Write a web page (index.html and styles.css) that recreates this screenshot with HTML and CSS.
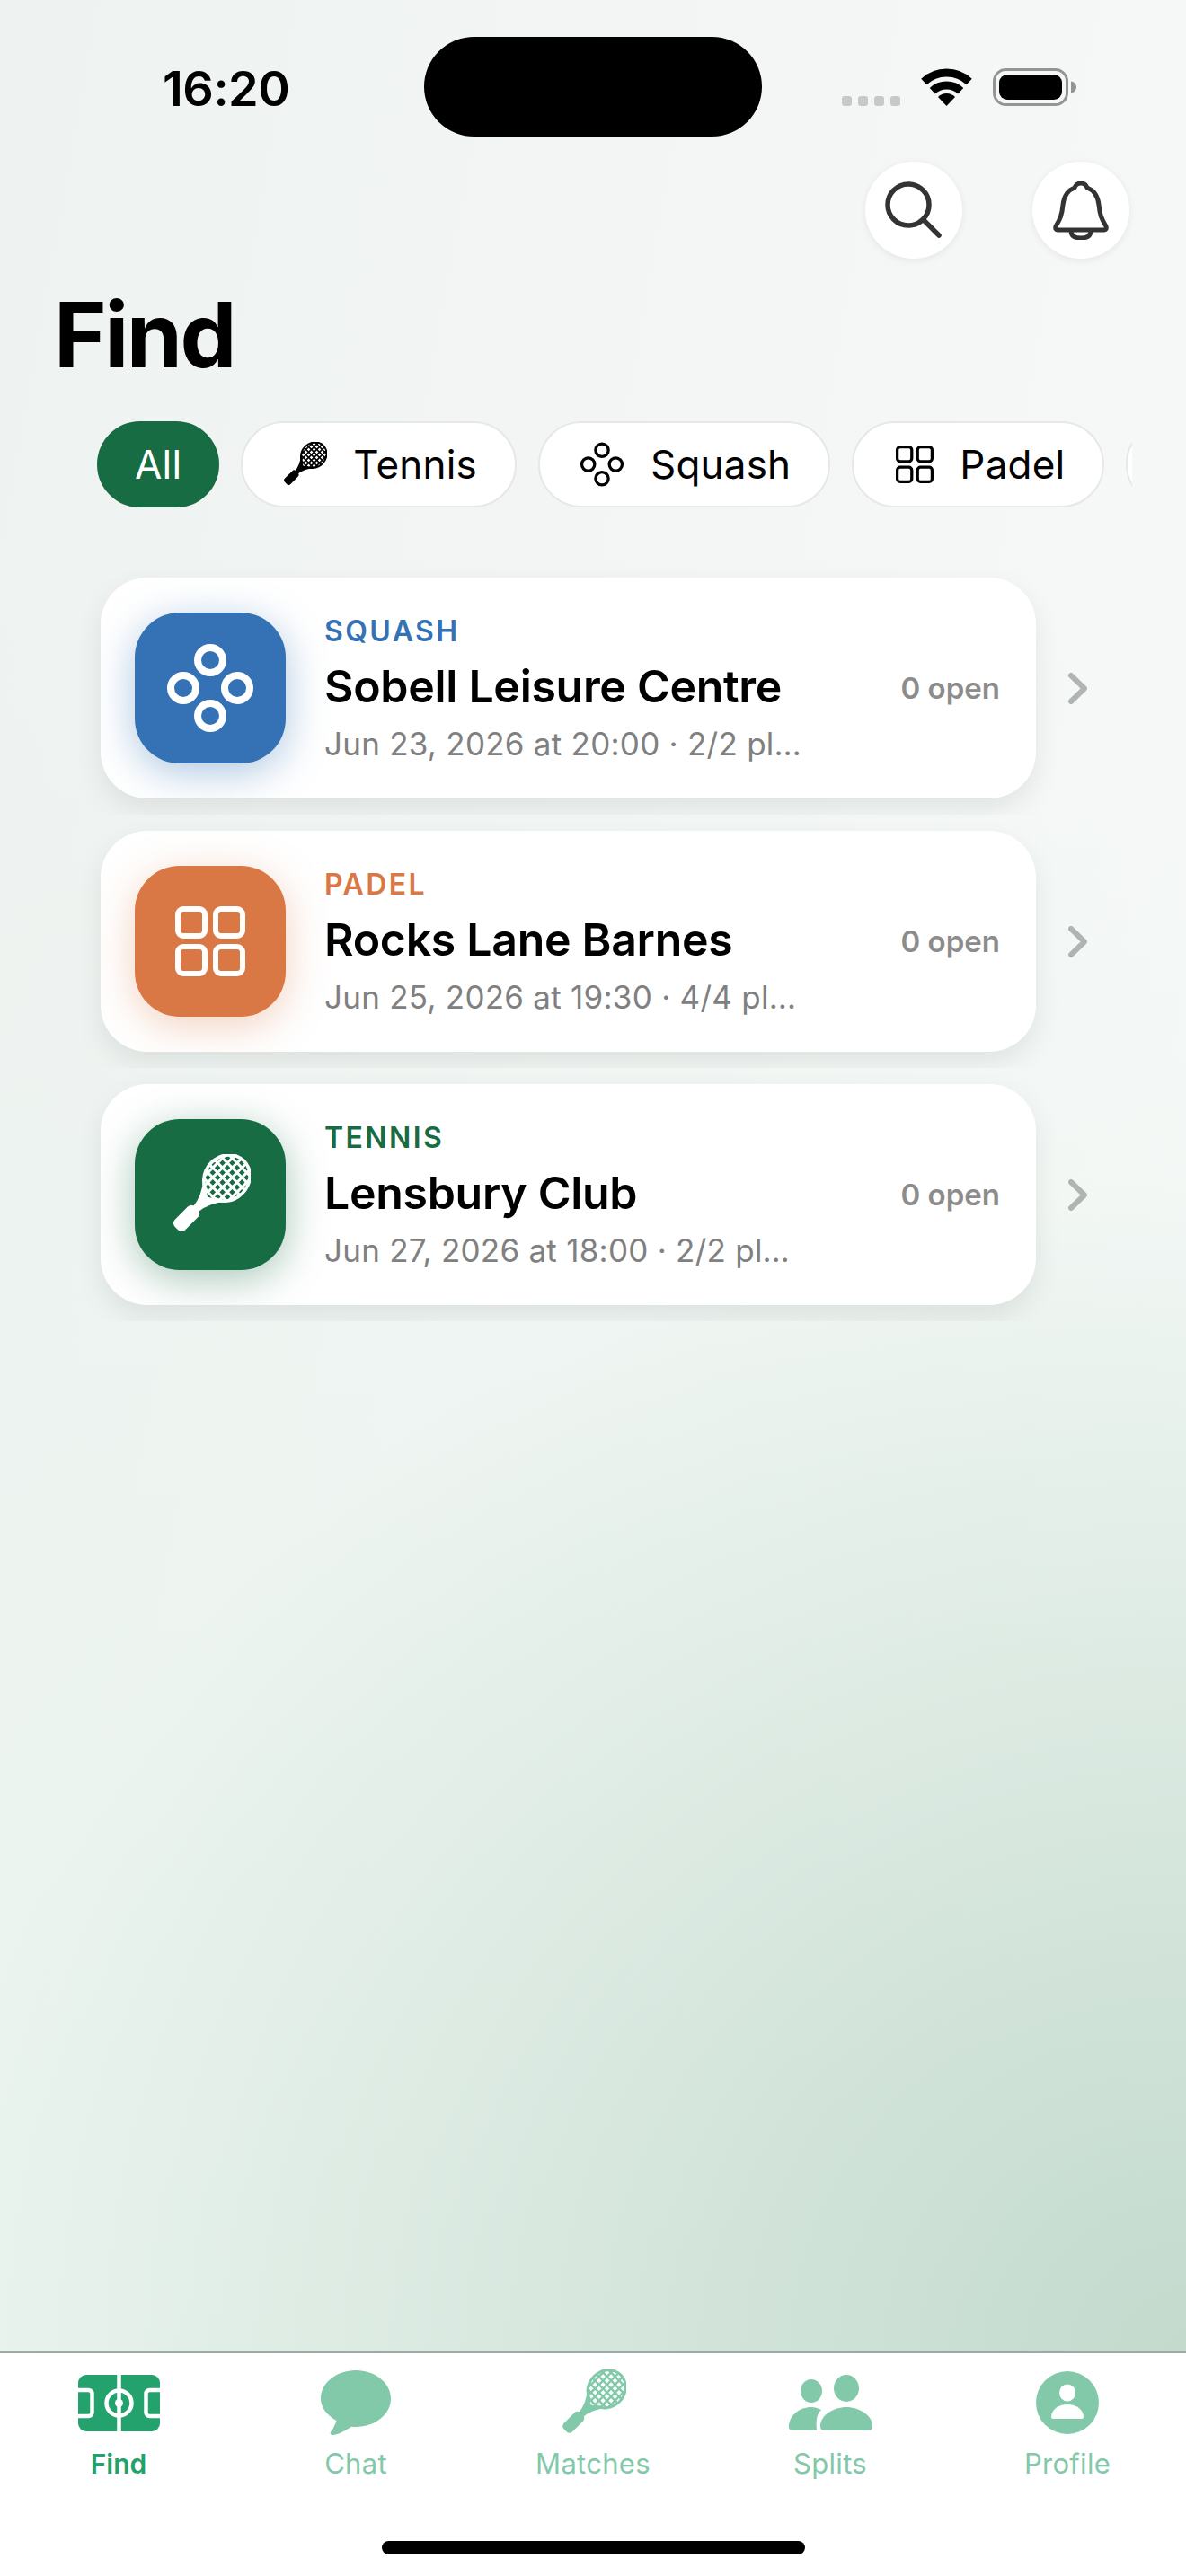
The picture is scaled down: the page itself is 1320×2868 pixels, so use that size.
FILE: index.html
```html
<!DOCTYPE html>
<html lang="en">
<head>
	<meta charset="UTF-8">
	<title>Find</title>
	<link rel="stylesheet" href="styles.css">
</head>
<body>
	<svg class="defs" aria-hidden="true">
		<symbol id="i-racket" viewBox="0 0 100 100">
			<clipPath id="mesh-clip"><ellipse cx="50" cy="21" rx="25" ry="28"/></clipPath>
			<g transform="rotate(45 50 50)">
				<ellipse cx="50" cy="21" rx="29" ry="32" fill="currentColor"/>
				<path d="M30 42Q44 58 45.500 76h9Q56 58 70 42z" fill="currentColor"/>
				<rect x="41" y="74" width="18" height="35" rx="6" fill="currentColor"/>
				<g clip-path="url(#mesh-clip)" class="mesh">
					<path d="M24.500 -8V50M33 -8V50M41.500 -8V50M50 -8V50M58.500 -8V50M67 -8V50M75.500 -8V50"/>
				</g>
				<path class="throat-hole" d="M50 54.500l-4.500 -3h9z"/>
			</g>
		</symbol>
		<symbol id="i-rings" viewBox="0 0 96 98">
			<g fill="none" stroke="currentColor">
				<circle cx="48" cy="18" r="14"/>
				<circle cx="18" cy="49" r="14"/>
				<circle cx="78" cy="49" r="14"/>
				<circle cx="48" cy="80" r="14"/>
			</g>
		</symbol>
		<symbol id="i-grid" viewBox="0 0 78 78">
			<g fill="none" stroke="currentColor" stroke-width="6">
				<rect x="3" y="3" width="30" height="30" rx="6"/>
				<rect x="45" y="3" width="30" height="30" rx="6"/>
				<rect x="3" y="45" width="30" height="30" rx="6"/>
				<rect x="45" y="45" width="30" height="30" rx="6"/>
			</g>
		</symbol>
		<symbol id="i-chevron" viewBox="0 0 21 35">
			<path d="M3 3l15 14.500L3 32" fill="none" stroke="currentColor" stroke-width="6" stroke-linecap="round" stroke-linejoin="round"/>
		</symbol>
	</svg>

	<div class="phone">
		<main class="screen">
			<div class="status">
				<div class="status-left">16:20</div>
				<div class="island"></div>
				<div class="status-right">
					<div class="signal"><span></span><span></span><span></span><span></span></div>
					<svg class="wifi" viewBox="0 0 57 42">
						<path d="M28.500 42L19 32A13.500 13.500 0 0 1 38 32z"/>
						<path class="wifi-arc" d="M12.800 25.200A23 23 0 0 1 44.200 25.200"/>
						<path class="wifi-arc" d="M3.300 15A37 37 0 0 1 53.700 15"/>
					</svg>
					<svg class="battery" viewBox="0 0 93 42">
						<rect class="battery-case" x="1.500" y="1.500" width="81" height="39" rx="13"/>
						<rect x="7" y="7" width="70" height="28" rx="9"/>
						<path class="battery-cap" d="M87 14.500q6 1 6 6.500t-6 6.500z"/>
					</svg>
				</div>
			</div>

			<div class="actions">
				<button class="round-btn">
					<svg class="search-icon" viewBox="0 0 64 64">
						<circle cx="26" cy="26" r="23"/>
						<path d="M43 43l17 17"/>
					</svg>
				</button>
				<button class="round-btn">
					<svg class="bell-icon" viewBox="0 0 62 66">
						<path d="M31 3C35 3 37 5 38 8C46 11 50 18 51 27C52 38 54 43 59 51Q60 55 57 55H5Q2 55 3 51C8 43 10 38 11 27C12 18 16 11 24 8C25 5 27 3 31 3z"/>
						<path d="M20 56C20 62 25 64 31 64C37 64 42 62 42 56"/>
					</svg>
				</button>
			</div>

			<h1 class="title">Find</h1>

			<div class="chips">
				<div class="chip chip-active">All</div>
				<div class="chip">
					<svg class="chip-icon"><use href="#i-racket"/></svg>
					Tennis
				</div>
				<div class="chip">
					<svg class="chip-icon rings-thin"><use href="#i-rings"/></svg>
					Squash
				</div>
				<div class="chip">
					<svg class="chip-icon grid-small"><use href="#i-grid"/></svg>
					Padel
				</div>
				<div class="chip chip-cut"></div>
			</div>

			<div class="list">
				<div class="row">
					<div class="card">
						<div class="badge badge-squash">
							<svg class="badge-rings"><use href="#i-rings"/></svg>
						</div>
						<div class="info">
							<div class="sport sport-squash">SQUASH</div>
							<div class="venue">Sobell Leisure Centre</div>
							<div class="when">Jun 23, 2026 at 20:00 · 2/2 pl…</div>
						</div>
						<div class="open">0 open</div>
					</div>
					<svg class="chevron"><use href="#i-chevron"/></svg>
				</div>
				<div class="row">
					<div class="card">
						<div class="badge badge-padel">
							<svg class="badge-grid"><use href="#i-grid"/></svg>
						</div>
						<div class="info">
							<div class="sport sport-padel">PADEL</div>
							<div class="venue">Rocks Lane Barnes</div>
							<div class="when">Jun 25, 2026 at 19:30 · 4/4 pl…</div>
						</div>
						<div class="open">0 open</div>
					</div>
					<svg class="chevron"><use href="#i-chevron"/></svg>
				</div>
				<div class="row">
					<div class="card">
						<div class="badge badge-tennis">
							<svg class="badge-racket"><use href="#i-racket"/></svg>
						</div>
						<div class="info">
							<div class="sport sport-tennis">TENNIS</div>
							<div class="venue">Lensbury Club</div>
							<div class="when">Jun 27, 2026 at 18:00 · 2/2 pl…</div>
						</div>
						<div class="open">0 open</div>
					</div>
					<svg class="chevron"><use href="#i-chevron"/></svg>
				</div>
			</div>
		</main>

		<nav class="tabbar">
			<div class="tabs">
				<div class="tab tab-active">
					<div class="tab-icon">
						<svg class="ic-field" viewBox="0 0 91 63">
							<rect width="91" height="63" rx="9" fill="currentColor"/>
							<g class="field-lines">
								<path d="M45.500 0V63"/>
								<circle cx="45.500" cy="31.500" r="14"/>
								<path d="M0 17H11.500a4 4 0 0 1 4 4V42a4 4 0 0 1 -4 4H0"/>
								<path d="M91 17H79.500a4 4 0 0 0 -4 4V42a4 4 0 0 0 4 4H91"/>
							</g>
							<circle cx="45.500" cy="31.500" r="4.500" fill="#fff"/>
						</svg>
					</div>
					<div class="tab-label">Find</div>
				</div>
				<div class="tab">
					<div class="tab-icon">
						<svg class="ic-chat" viewBox="0 0 78 72">
							<path fill="currentColor" d="M39 0C60.500 0 78 14 78 31.500S60.500 63 39 63C37 63 35.500 63 34 62.800C28 67 21 71 14 72C10.500 72 10 70 11.500 68C14 64.500 16 60.500 17.500 56C7 50 0 41.500 0 31.500C0 14 17.500 0 39 0z"/>
						</svg>
					</div>
					<div class="tab-label">Chat</div>
				</div>
				<div class="tab">
					<div class="tab-icon">
						<svg class="ic-racket"><use href="#i-racket"/></svg>
					</div>
					<div class="tab-label">Matches</div>
				</div>
				<div class="tab">
					<div class="tab-icon">
						<svg class="ic-splits" viewBox="0 0 93 62">
							<g fill="currentColor">
								<ellipse cx="25" cy="18" rx="12" ry="13"/>
								<ellipse cx="64" cy="15" rx="14" ry="15"/>
								<path d="M35 57C35 45 50 36 64 36C78 36 93 45 93 57Q93 62 89 62H39Q35 62 35 57z"/>
								<path d="M0 58C0 45 12 36 25 36C29 36 32 37 36 39C31 44 30 50 31 62H4Q0 62 0 58z"/>
							</g>
						</svg>
					</div>
					<div class="tab-label">Splits</div>
				</div>
				<div class="tab">
					<div class="tab-icon">
						<svg class="ic-profile" viewBox="0 0 70 70">
							<circle cx="35" cy="35" r="35" fill="currentColor"/>
							<ellipse cx="35" cy="24" rx="9" ry="9.500" fill="#fff"/>
							<path d="M17 51C17 43 25 37 35 37C45 37 53 43 53 51Q53 53 51 53H19Q17 53 17 51z" fill="#fff"/>
						</svg>
					</div>
					<div class="tab-label">Profile</div>
				</div>
			</div>
			<div class="home-bar"></div>
		</nav>
	</div>
</body>
</html>
```

FILE: styles.css
```css
*{box-sizing: border-box;margin: 0;padding: 0;}
body{font-family: Inter, "Liberation Sans", sans-serif;color: #000;}
.defs{display: block;width: 0;height: 0;}
.phone{width: 1320px;height: 2868px;display: flex;flex-direction: column;overflow: hidden;}

.screen{flex: 1;min-height: 0;background: radial-gradient(ellipse 1400px 1300px at 100% 100%, #c3dacd 0%, rgba(195,218,205,0) 100%), linear-gradient(180deg, rgba(233,244,238,0) 25%, rgba(233,244,238,0.85) 100%), linear-gradient(100deg, #eef2f0, #f8faf9);}

/* status bar */
.status{display: flex;align-items: center;padding-top: 41px;}
.status-left{width: 472px;padding: 3px 0 0 181px;font-size: 54px;font-weight: 600;letter-spacing: -0.500px;}
.island{width: 376px;height: 111px;background: #000;border-radius: 56px;}
.status-right{flex: 1;display: flex;justify-content: flex-end;align-items: flex-end;padding-right: 122px;}
.signal{display: flex;gap: 7px;margin-right: 23px;}
.signal span{width: 11px;height: 11px;background: #c8c8c8;border-radius: 3px;}
.wifi{width: 57px;height: 42px;margin-right: 23px;}
.wifi-arc{fill: none;stroke: #000;stroke-width: 9;}
.battery{width: 93px;height: 42px;}
.battery-case{fill: none;stroke: #949494;stroke-width: 3;}
.battery-cap{fill: #949494;}

/* header */
.actions{display: flex;justify-content: flex-end;gap: 78px;margin-top: 28px;padding-right: 63px;}
.round-btn{width: 108px;height: 108px;border: none;border-radius: 50%;background: #fff;display: flex;align-items: center;justify-content: center;box-shadow: 0 2px 8px rgba(0,0,0,0.07);}
.search-icon{width: 64px;height: 64px;fill: none;stroke: #333;stroke-width: 5.500;stroke-linecap: round;}
.bell-icon{width: 62px;height: 66px;fill: none;stroke: #333;stroke-width: 5;stroke-linejoin: round;}
.title{font-size: 100px;font-weight: 700;line-height: 120px;letter-spacing: -2.500px;margin: 25px 0 0 60px;}

/* filter chips */
.chips{display: flex;gap: 24px;margin: 36px 60px 0;padding-left: 48px;overflow: hidden;}
.chip{flex: none;height: 96px;padding: 0 42px 0 44px;display: flex;align-items: center;gap: 29px;background: #fff;border: 2px solid #e6e8e7;border-radius: 48px;font-size: 44px;letter-spacing: 0.200px;--hole: #fff;}
.chip-active{background: #176c43;border-color: #176c43;color: #fff;padding: 0 40px;}
.chip-cut{width: 100px;}
.chip-icon{width: 50px;height: 50px;stroke-width: 6;}
.rings-thin{stroke-width: 6.500;}
.grid-small{width: 42px;height: 42px;margin: 0 0 0 3px;}

/* game rows */
.list{margin-top: 60px;}
.row{height: 282px;padding: 18px 0 18px 112px;display: flex;align-items: center;gap: 36px;overflow: hidden;}
.card{width: 1041px;height: 246px;display: flex;align-items: center;padding: 0 40px 0 38px;background: #fff;border-radius: 52px;overflow: hidden;box-shadow: 0 12px 30px rgba(0,0,0,0.08);}
.badge{flex: none;width: 168px;height: 168px;border-radius: 50px;display: flex;align-items: center;justify-content: center;color: #fff;}
.badge-squash{background: #3572b5;box-shadow: 0 10px 46px rgba(53,114,181,0.4);}
.badge-padel{background: #d97844;box-shadow: 0 10px 46px rgba(217,120,68,0.34);}
.badge-tennis{background: #176c43;box-shadow: 0 10px 46px rgba(23,108,67,0.38);--hole: #176c43;}
.badge-rings{width: 96px;height: 98px;stroke-width: 8;}
.badge-grid{width: 78px;height: 78px;}
.badge-racket{width: 90px;height: 90px;}
.info{flex: 1;min-width: 0;margin-left: 43px;white-space: nowrap;}
.sport{font-size: 32px;font-weight: 600;letter-spacing: 2.400px;line-height: 40px;}
.sport-squash{color: #3572b5;}
.sport-padel{color: #d97844;}
.sport-tennis{color: #176c43;}
.venue{font-size: 50px;font-weight: 580;letter-spacing: -0.300px;line-height: 64px;margin-top: 9px;}
.when{font-size: 35px;letter-spacing: 0.250px;color: #808080;line-height: 44px;margin-top: 10px;}
.open{font-size: 33px;font-weight: 600;color: #8c8c8c;}
.chevron{width: 21px;height: 35px;color: #b0b5b2;}
.mesh{fill: none;stroke: var(--hole);stroke-width: 5.200;stroke-dasharray: 5.200 3.300;}
.throat-hole{fill: var(--hole);}

/* tab bar */
.tabbar{flex: none;height: 250px;background: #fff;border-top: 2px solid #9aaca3;}
.tabs{display: flex;padding-top: 19px;}
.tab{width: 264px;display: flex;flex-direction: column;align-items: center;color: #82c9a9;}
.tab-active{color: #23a26d;}
.tab-icon{height: 72px;display: flex;align-items: center;--hole: #fff;}
.tab-label{font-size: 31px;letter-spacing: 0.300px;line-height: 36px;margin-top: 14px;}
.tab-active .tab-label{font-size: 30px;letter-spacing: 0;font-weight: 600;}
.ic-field{width: 91px;height: 63px;}
.field-lines{fill: none;stroke: #fff;stroke-width: 4.500;}
.ic-chat{width: 78px;height: 72px;}
.ic-racket{width: 74px;height: 74px;}
.ic-splits{width: 93px;height: 62px;}
.ic-profile{width: 70px;height: 70px;}
.home-bar{width: 471px;height: 15px;margin: 68px auto 0;background: #000;border-radius: 8px;}
```
